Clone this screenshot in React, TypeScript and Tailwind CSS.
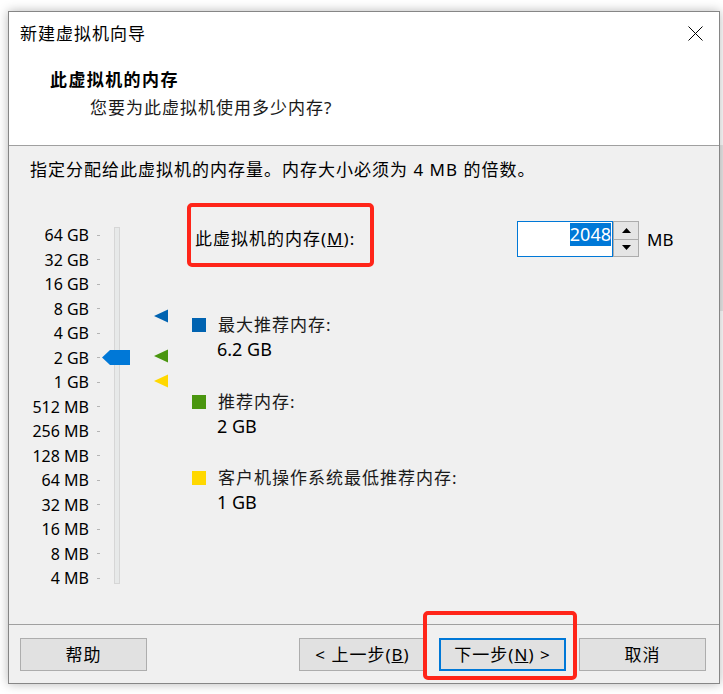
import React from 'react';

// 内存刻度（从大到小）
const scaleLabels = [
  '64 GB', '32 GB', '16 GB', '8 GB', '4 GB', '2 GB', '1 GB',
  '512 MB', '256 MB', '128 MB', '64 MB', '32 MB', '16 MB', '8 MB', '4 MB',
];

const legendItems = [
  { id: 1, swatch: 'bg-[#0063b1]', label: '最大推荐内存:', value: '6.2 GB' },
  { id: 2, swatch: 'bg-[#4a960f]', label: '推荐内存:', value: '2 GB' },
  { id: 3, swatch: 'bg-[#ffd800]', label: '客户机操作系统最低推荐内存:', value: '1 GB' },
];

const font = "font-['Noto_Sans','Noto_Sans_CJK_SC',sans-serif]";

const Marker: React.FC<{ className: string; fill: string }> = ({ className, fill }) => (
  <svg className={`absolute ${className}`} width="14" height="14" viewBox="0 0 14 14">
    <polygon points="0,7 14,0.5 14,13.5" fill={fill} />
  </svg>
);

const WizardButton: React.FC<{ children: React.ReactNode; primary?: boolean }> = ({ children, primary }) => (
  <button
    className={`w-[127px] h-[33px] bg-[#e1e1e1] text-[17px] leading-none tracking-[1px] text-black flex items-center justify-center ${
      primary ? 'border-2 border-[#0078d7]' : 'border border-[#adadad]'
    }`}
  >
    {children}
  </button>
);

export default function App() {
  return (
    <div className={`relative w-[723px] h-[694px] bg-white overflow-hidden pt-[11px] pl-[8px] ${font}`}>
      {/* 后面窗口的一点边 */}
      <div className="absolute right-0 top-[145px] w-[4px] h-[166px] bg-[#e9e9e9]" />

      <div className="relative z-10 w-[712px] h-[673px] border border-[#868686] bg-[#f0f0f0] flex flex-col shadow-[0_0_10px_rgba(0,0,0,0.28)]">
        {/* 标题栏 */}
        <div className="h-[44px] bg-white flex items-center justify-between pl-[11px] pr-[16px]">
          <span className="text-[17px] tracking-[1px] leading-[24px] text-black">新建虚拟机向导</span>
          <svg width="15" height="15" viewBox="0 0 15 15" className="mt-[-1px]">
            <path d="M0.5 0.5 L14.5 14.5 M14.5 0.5 L0.5 14.5" stroke="#000" strokeWidth="1" />
          </svg>
        </div>

        {/* 页眉 */}
        <div className="h-[90px] bg-white border-b border-[#a0a0a0] pt-[12px]">
          <div className="pl-[41px] text-[17px] font-bold tracking-[1.4px] leading-[24px] text-black">此虚拟机的内存</div>
          <div className="pl-[81px] mt-[4px] text-[17px] tracking-[1px] leading-[24px] text-[#1a1a1a]">
            您要为此虚拟机使用多少内存?
          </div>
        </div>

        {/* 内容 */}
        <div className="flex-1 pt-[12px]">
          <div className="pl-[21px] text-[17px] tracking-[1px] leading-[24px] text-black">
            指定分配给此虚拟机的内存量。内存大小必须为 4 MB 的倍数。
          </div>

          <div className="relative mt-[39px] flex items-start">
            {/* 刻度 */}
            <div className="ml-[21px] pt-[2px] flex flex-col">
              {scaleLabels.map((label) => (
                <div key={label} className="h-[24.5px] flex items-center">
                  <span className="w-[59px] text-right text-[16px] leading-none text-black">{label}</span>
                  <span className="ml-[8px] w-[3px] h-[1px] bg-[#b4b4b4]" />
                </div>
              ))}
            </div>
            {/* 滑轨 */}
            <div className="ml-[14px] mt-[6px] w-[6px] h-[357px] border border-[#d6d6d6] bg-[#e7e9e9]" />

            {/* 滑块 */}
            <svg className="absolute left-[93px] top-[129px]" width="28" height="15" viewBox="0 0 28 15">
              <polygon points="0,7.5 8,0 28,0 28,15 8,15" fill="#0078d7" />
            </svg>
            <Marker className="left-[145px] top-[88px]" fill="#0063b1" />
            <Marker className="left-[145px] top-[128px]" fill="#4a960f" />
            <Marker className="left-[145px] top-[153px]" fill="#ffd800" />

            {/* 右侧 */}
            <div className="relative ml-[72px] flex flex-col">
              <div className="h-[36px] flex items-center">
                <span className="w-[325px] pl-[3px] text-[17px] tracking-[1px] leading-[24px] text-black">
                  此虚拟机的内存(<span className="underline">M</span>):
                </span>
                <div className="w-[96px] h-[36px] bg-white border border-[#0078d7] flex items-start justify-end pt-[1px] pr-[1px]">
                  <span className="bg-[#0078d7] text-white text-[18px] leading-[23px]">2048</span>
                </div>
                <div className="w-[26px] h-[36px] border border-[#acacac] bg-[#f0f0f0] flex flex-col">
                  <div className="flex-1 bg-[#e5e5e5] border-b border-[#acacac] flex items-center justify-center">
                    <svg width="9" height="5" viewBox="0 0 9 5">
                      <polygon points="4.5,0 9,5 0,5" fill="#000" />
                    </svg>
                  </div>
                  <div className="flex-1 bg-[#e5e5e5] flex items-center justify-center">
                    <svg width="9" height="5" viewBox="0 0 9 5">
                      <polygon points="0,0 9,0 4.5,5" fill="#000" />
                    </svg>
                  </div>
                </div>
                <span className="ml-[8px] text-[17px] leading-none text-black">MB</span>
              </div>

              <div className="mt-[56px] flex flex-col gap-[28.5px]">
                {legendItems.map((item) => (
                  <div key={item.id} className="flex flex-col">
                    <div className="h-[24px] flex items-center">
                      <span className={`w-[14px] h-[14px] ${item.swatch}`} />
                      <span className="ml-[12px] text-[17px] tracking-[1px] leading-[24px] text-[#1a1a1a]">{item.label}</span>
                    </div>
                    <div className="h-[24px] flex items-center pl-[25px] text-[18px] leading-none text-black">{item.value}</div>
                  </div>
                ))}
              </div>

              {/* 红框标注 */}
              <div className="absolute left-[-5px] top-[-18px] w-[187px] h-[64px] border-4 border-[#ff2519] rounded-[5px]" />
            </div>
          </div>
        </div>

        {/* 底部按钮 */}
        <div className="relative h-[59px] border-t border-[#a0a0a0] flex items-start justify-between pt-[13px] pl-[11px] pr-[13px]">
          <WizardButton>帮助</WizardButton>
          <div className="flex gap-[13px]">
            <WizardButton>
              &lt; 上一步(<span className="underline">B</span>)
            </WizardButton>
            <WizardButton primary>
              下一步(<span className="underline">N</span>) &gt;
            </WizardButton>
            <WizardButton>取消</WizardButton>
          </div>
          <div className="absolute left-[414px] top-[-14px] w-[154px] h-[69px] border-4 border-[#ff2519] rounded-[5px]" />
        </div>
      </div>
    </div>
  );
}
